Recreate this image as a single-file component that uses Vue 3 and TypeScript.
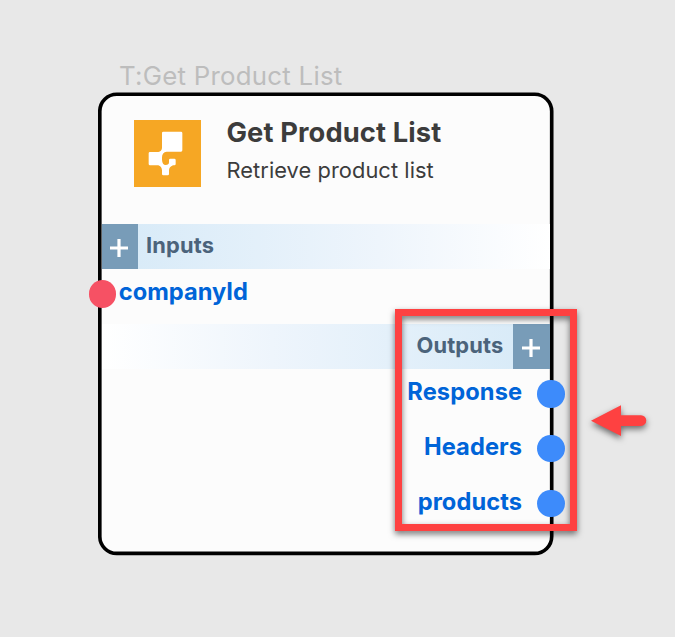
<script setup lang="ts">
interface Port {
  name: string
}

const title = 'Get Product List'
const description = 'Retrieve product list'
const inputs: Port[] = [{ name: 'companyId' }]
const outputs: Port[] = [{ name: 'Response' }, { name: 'Headers' }, { name: 'products' }]
</script>

<template>
  <main class="canvas">
    <article class="node">
      <div class="tag">T:{{ title }}</div>
      <svg class="frame" viewBox="0 0 456 464">
        <rect x="1.8" y="2.3" width="451.9" height="459.1" rx="17" />
      </svg>
      <header class="head">
        <svg class="logo" viewBox="0 0 201 201">
          <rect width="201" height="201" fill="#f6a724" />
          <path
            fill="#fff"
            d="M88 35H141Q145 35 145 39V91Q145 95 141 95H98Q84 97 84 112V119Q85 135 95 135Q105 135 105 127V120Q105 116 109 116H121Q125 116 125 120V132Q125 136 121 136H117Q105 141 105 151V162Q105 166 101 166H88Q84 166 84 162V151Q83 139 73 136H48Q44 136 44 132V100Q44 96 48 96H73Q83 94 84 84V39Q84 35 88 35Z"
          />
        </svg>
        <div class="heading">
          <h1>{{ title }}</h1>
          <p>{{ description }}</p>
        </div>
      </header>

      <section>
        <div class="bar bar-in">
          <button class="add" aria-label="Add input">
            <svg viewBox="0 0 18 18"><path d="M9 0V18M0 9H18" /></svg>
          </button>
          <span>Inputs</span>
        </div>
        <div v-for="port in inputs" :key="port.name" class="port port-in">
          <i class="dot"></i><span>{{ port.name }}</span>
        </div>
      </section>

      <section>
        <div class="bar bar-out">
          <span>Outputs</span>
          <button class="add" aria-label="Add output">
            <svg viewBox="0 0 18 18"><path d="M9 0V18M0 9H18" /></svg>
          </button>
        </div>
        <div v-for="port in outputs" :key="port.name" class="port port-out">
          <span>{{ port.name }}</span><i class="dot"></i>
        </div>
      </section>
    </article>

    <div class="highlight"></div>
    <svg class="arrow" viewBox="0 0 56 32">
      <path d="M0 15.8L30 .3V10.3H50A5.3 5.3 0 0 1 50 20.9H30V31Z" />
    </svg>
  </main>
</template>

<style>
body {
  margin: 0;
  background: #e8e8e8;
}
</style>

<style scoped>
.canvas {
  position: relative;
  width: 675px;
  height: 637px;
  overflow: hidden;
  background: #e8e8e8;
  font-family: Inter, sans-serif;
}

.node {
  position: absolute;
  left: 98px;
  top: 92px;
  width: 456px;
  height: 464px;
  box-sizing: border-box;
  padding: 28px 4.3px 0 3.6px;
}

.tag {
  position: absolute;
  left: 21px;
  top: -32px;
  font-size: 25.8px;
  letter-spacing: 0.26px;
  line-height: 32px;
  color: #bdbdbd;
  white-space: nowrap;
}

.frame {
  position: absolute;
  left: 0;
  top: 0;
  width: 456px;
  height: 464px;
}

.frame rect {
  fill: #fcfcfc;
  stroke: #000;
  stroke-width: 3.64px;
}

.head {
  position: relative;
  display: flex;
  height: 103.6px;
  padding-left: 32.4px;
  gap: 25.5px;
}

.logo {
  width: 67px;
  height: 67px;
}

h1,
p {
  margin: 0;
  color: #3c3c3c;
  white-space: nowrap;
}

h1 {
  margin-top: -4px;
  font-size: 27.3px;
  font-weight: 700;
  letter-spacing: 0.12px;
  line-height: 33px;
}

p {
  margin-top: 8px;
  font-size: 21.84px;
  letter-spacing: 0.06px;
  line-height: 27px;
}

section {
  position: relative;
}

.bar {
  display: flex;
  height: 45.5px;
  color: #4b637b;
  font-size: 21.84px;
  font-weight: 700;
  letter-spacing: 0.15px;
  line-height: 42.6px;
}

.bar-in {
  gap: 8px;
  background: linear-gradient(90deg, #d9ebf8 8%, #eef5fc 62%, #fff);
}

.bar-out {
  justify-content: flex-end;
  gap: 10px;
  background: linear-gradient(270deg, #d9ebf8 8%, #eef5fc 62%, #fff);
}

.add {
  display: flex;
  align-items: center;
  justify-content: center;
  width: 36.4px;
  padding: 3px 2px 0 0;
  border: 0;
  background: #789cb8;
}

.add svg {
  width: 18px;
  height: 18px;
  fill: none;
  stroke: #fff;
  stroke-width: 3.2px;
}

.port {
  display: flex;
  align-items: center;
  height: 54.6px;
  color: #0064d8;
  font-size: 23.66px;
  font-weight: 700;
}

.port span {
  margin-top: -9px;
}

.dot {
  width: 27.3px;
  height: 27.3px;
  margin-top: -5px;
  border-radius: 50%;
}

.port-in {
  gap: 2.7px;
  margin-left: -12.8px;
}

.port-in .dot {
  background: #f65164;
}

.port-out {
  justify-content: flex-end;
  gap: 15px;
  margin-right: -14.8px;
  letter-spacing: 0.1px;
}

.port-out .dot {
  background: #3d8bfb;
}

.highlight {
  position: absolute;
  left: 395px;
  top: 309px;
  width: 182px;
  height: 222px;
  box-sizing: border-box;
  border: 7px solid #fe4141;
  filter: drop-shadow(0 3px 3px rgba(0, 0, 0, 0.55));
}

.arrow {
  position: absolute;
  left: 591px;
  top: 404.5px;
  width: 56px;
  height: 32px;
  overflow: visible;
  fill: #fe4141;
  filter: drop-shadow(0 3px 3px rgba(0, 0, 0, 0.55));
}
</style>
